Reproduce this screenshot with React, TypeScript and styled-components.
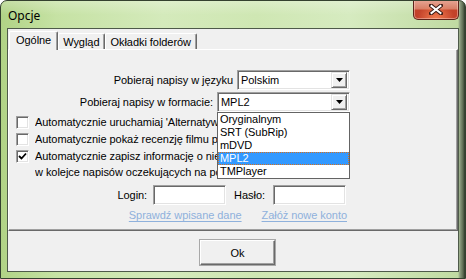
import React from "react";
import styled, { createGlobalStyle } from "styled-components";

const GlobalStyle = createGlobalStyle`
  html, body { margin: 0; padding: 0; background: #ffffff; }
  body { width: 466px; height: 279px; overflow: hidden; }
  * { box-sizing: border-box; }
`;

const UI_FONT = `"Liberation Sans", Arial, sans-serif`;

const Window = styled.div`
  width: 466px;
  height: 279px;
  border: 1px solid #34412f;
  border-radius: 7px 7px 0 0;
  padding: 0 6px 6px;
  display: flex;
  flex-direction: column;
  background:
    linear-gradient(270deg, #2e382b 0px, #5d6b52 2px, #8c9c80 5px, rgba(140,156,128,0) 7px),
    linear-gradient(180deg, rgba(255,255,255,0.25) 0px, rgba(255,255,255,0) 14px),
    linear-gradient(90deg, #b1d386 0%, #c6e2a4 12%, #d4eabb 35%, #cfe7b3 55%, #d6ebc0 75%, #bfd9a0 100%);
  overflow: hidden;
`;

const TitleBar = styled.div`
  height: 27px;
  display: flex;
  align-items: flex-start;
`;

const Title = styled.span`
  font-family: "Noto Sans", "Open Sans", sans-serif;
  font-size: 12px;
  line-height: 16px;
  color: #000;
  margin: 7px 0 0 1px;
`;

const CloseButton = styled.div`
  margin-left: auto;
  margin-top: -1px;
  width: 46px;
  height: 20px;
  border: 1px solid #5c241a;
  border-top: none;
  border-radius: 0 0 5px 5px;
  background:
    radial-gradient(ellipse at 50% 100%, rgba(255,140,90,0.8) 0%, rgba(255,140,90,0) 60%),
    linear-gradient(180deg, #e7a796 0%, #d88068 45%, #c4432a 55%, #c2402a 100%);
  box-shadow: inset 0 0 0 1px rgba(255,220,210,0.45);
  display: flex;
  align-items: center;
  justify-content: center;
`;

const Client = styled.div`
  flex: 1;
  border: 1px solid #4e5a4a;
  background: #f0f0f0;
  display: flex;
  flex-direction: column;
  font-family: ${UI_FONT};
  font-size: 11px;
  letter-spacing: -0.05px;
  color: #000;
`;

const TabStrip = styled.div`
  display: flex;
  align-items: flex-end;
  padding: 2px 0 0 1px;
  height: 20px;
  position: relative;
  z-index: 1;
`;

const Tab = styled.div<{ $active?: boolean }>`
  height: ${(p) => (p.$active ? 19 : 16)}px;
  margin-bottom: ${(p) => (p.$active ? -1 : 0)}px;
  padding: ${(p) => (p.$active ? "1px 6px 0 6px" : "1px 5px 0 4px")};
  border-top: 1px solid #ffffff;
  border-left: 1px solid #ffffff;
  border-right: 1px solid #696969;
  border-radius: 2px 2px 0 0;
  box-shadow: inset -1px 0 0 #a0a0a0;
  background: #f0f0f0;
  line-height: 14px;
  white-space: nowrap;
`;

const Panel = styled.div`
  height: 182px;
  border-top: 1px solid #ffffff;
  border-left: 1px solid #ffffff;
  border-right: 1px solid #696969;
  border-bottom: 1px solid #696969;
  box-shadow: inset -1px -1px 0 #a0a0a0;
  position: relative;
  display: flex;
  flex-direction: column;
  padding-top: 20px;
`;

const FieldRow = styled.div<{ $mt?: number; $pr?: number; $gap?: number }>`
  display: flex;
  justify-content: flex-end;
  align-items: center;
  gap: ${(p) => p.$gap ?? 4}px;
  margin-top: ${(p) => p.$mt ?? 0}px;
  padding-right: ${(p) => p.$pr ?? 107}px;
  height: 20px;
`;

const Label = styled.span<{ $ml?: number; $mr?: number }>`
  margin-left: ${(p) => p.$ml ?? 0}px;
  margin-right: ${(p) => p.$mr ?? 0}px;
`;

const Sunken = styled.div<{ $w: number }>`
  width: ${(p) => p.$w}px;
  height: 20px;
  border-top: 1px solid #a0a0a0;
  border-left: 1px solid #a0a0a0;
  border-right: 1px solid #ffffff;
  border-bottom: 1px solid #ffffff;
  box-shadow: inset 1px 1px 0 #696969, inset -1px -1px 0 #e3e3e3;
  background: #ffffff;
  display: flex;
  align-items: center;
  padding: 0 2px 0 3px;
`;

const SelectText = styled.span`
  flex: 1;
  line-height: 14px;
`;

const ArrowButton = styled.div`
  width: 16px;
  height: 16px;
  background: #f0f0f0;
  border-top: 1px solid #e3e3e3;
  border-left: 1px solid #e3e3e3;
  border-right: 1px solid #696969;
  border-bottom: 1px solid #696969;
  box-shadow: inset 1px 1px 0 #ffffff, inset -1px -1px 0 #a0a0a0;
  display: flex;
  align-items: center;
  justify-content: center;
`;

const CheckRow = styled.div<{ $mt?: number }>`
  display: flex;
  align-items: flex-start;
  gap: 6px;
  padding-left: 7px;
  margin-top: ${(p) => p.$mt ?? 0}px;
  white-space: nowrap;
`;

const CheckBox = styled.div`
  width: 13px;
  height: 13px;
  margin-top: 2px;
  flex: none;
  border-top: 1px solid #a0a0a0;
  border-left: 1px solid #a0a0a0;
  border-right: 1px solid #ffffff;
  border-bottom: 1px solid #ffffff;
  box-shadow: inset 1px 1px 0 #696969, inset -1px -1px 0 #e3e3e3;
  background: #ffffff;
  display: flex;
  align-items: center;
  justify-content: center;
`;

const CheckText = styled.div`
  line-height: 16px;
  width: 182px;
  overflow: hidden;
`;

const LinkRow = styled.div`
  display: flex;
  justify-content: flex-end;
  gap: 20px;
  padding-right: 110px;
  margin-top: 3px;
  line-height: 14px;
`;

const Link = styled.span`
  color: #8fb1dc;
  text-decoration: underline;
  text-underline-offset: 2px;
`;

const DropList = styled.div`
  position: absolute;
  left: 208px;
  top: 62px;
  width: 133px;
  border: 1px solid #646464;
  background: #ffffff;
  z-index: 2;
`;

const DropItem = styled.div<{ $selected?: boolean }>`
  height: 13px;
  line-height: 13px;
  padding-left: 2px;
  color: ${(p) => (p.$selected ? "#ffffff" : "#000000")};
  background: ${(p) => (p.$selected ? "#3399ff" : "transparent")};
  outline: ${(p) => (p.$selected ? "1px dotted #d8701c" : "none")};
  outline-offset: -1px;
`;

const Footer = styled.div`
  flex: 1;
  display: flex;
  align-items: flex-start;
  padding: 9px 0 0 192px;
`;

const Button = styled.div`
  width: 75px;
  height: 25px;
  border-top: 1px solid #ffffff;
  border-left: 1px solid #ffffff;
  border-right: 1px solid #696969;
  border-bottom: 1px solid #696969;
  box-shadow: inset -1px -1px 0 #a0a0a0;
  outline: 1px solid #a8a8a8;
  display: flex;
  align-items: center;
  justify-content: center;
  line-height: 14px;
`;

const Arrow = () => (
  <svg width="7" height="4" viewBox="0 0 7 4">
    <path d="M0 0h7L3.5 4z" fill="#000" />
  </svg>
);

const Check = () => (
  <svg width="9" height="9" viewBox="0 0 9 9">
    <path d="M1 4 L3.5 6.5 L8 1.5" stroke="#000" strokeWidth="1.8" fill="none" />
  </svg>
);

const CloseX = () => (
  <svg width="14" height="11" viewBox="0 0 14 11">
    <path d="M2 1.5 L12 9.5 M12 1.5 L2 9.5" stroke="#3a1a14" strokeWidth="4" strokeLinecap="square" />
    <path d="M2.5 2 L11.5 9 M11.5 2 L2.5 9" stroke="#ffffff" strokeWidth="2" strokeLinecap="square" />
  </svg>
);

const formats = ["Oryginalnym", "SRT (SubRip)", "mDVD", "MPL2", "TMPlayer"];

export default function App() {
  return (
    <>
      <GlobalStyle />
      <Window>
        <TitleBar>
          <Title>Opcje</Title>
          <CloseButton>
            <CloseX />
          </CloseButton>
        </TitleBar>
        <Client>
          <TabStrip>
            <Tab $active>Ogólne</Tab>
            <Tab>Wygląd</Tab>
            <Tab>Okładki folderów</Tab>
          </TabStrip>
          <Panel>
            <FieldRow>
              <span>Pobieraj napisy w języku</span>
              <Sunken $w={113}>
                <SelectText>Polskim</SelectText>
                <ArrowButton>
                  <Arrow />
                </ArrowButton>
              </Sunken>
            </FieldRow>
            <FieldRow $mt={2}>
              <span>Pobieraj napisy w formacie:</span>
              <Sunken $w={133}>
                <SelectText>MPL2</SelectText>
                <ArrowButton>
                  <Arrow />
                </ArrowButton>
              </Sunken>
            </FieldRow>
            <CheckRow $mt={2}>
              <CheckBox />
              <CheckText>Automatycznie uruchamiaj 'Alternatywne'</CheckText>
            </CheckRow>
            <CheckRow $mt={1}>
              <CheckBox />
              <CheckText>Automatycznie pokaż recenzję filmu po pobraniu</CheckText>
            </CheckRow>
            <CheckRow $mt={1}>
              <CheckBox>
                <Check />
              </CheckBox>
              <CheckText>
                Automatycznie zapisz informację o nie znalezionych
                <br />
                w kolejce napisów oczekujących na pobranie
              </CheckText>
            </CheckRow>
            <FieldRow $mt={5} $pr={111} $gap={0}>
              <Label $mr={6}>Login:</Label>
              <Sunken $w={73} />
              <Label $ml={8} $mr={8}>Hasło:</Label>
              <Sunken $w={73} />
            </FieldRow>
            <LinkRow>
              <Link>Sprawdź wpisane dane</Link>
              <Link>Załóż nowe konto</Link>
            </LinkRow>
            <DropList>
              {formats.map((f) => (
                <DropItem key={f} $selected={f === "MPL2"}>
                  {f}
                </DropItem>
              ))}
            </DropList>
          </Panel>
          <Footer>
            <Button>Ok</Button>
          </Footer>
        </Client>
      </Window>
    </>
  );
}
